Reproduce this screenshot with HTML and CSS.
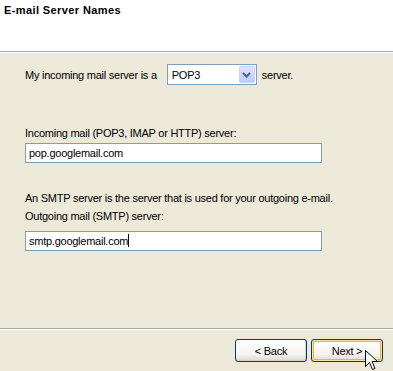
FILE: index.html
```html
<!DOCTYPE html>
<html lang="en">
<head>
    <meta charset="UTF-8">
    <meta name="viewport" content="width=device-width, initial-scale=1.0">
    <title>E-mail Server Names</title>
    <link rel="stylesheet" href="styles.css">
</head>
<body>
<div class="wizard">
    <div class="header">
        <h2>E-mail Server Names</h2>
    </div>

    <div class="content">
        <div class="server-type">
            <span>My incoming mail server is a</span>
            <div class="combo">
                <span class="combo-value">POP3</span>
                <span class="combo-button">
                    <svg width="9" height="6" viewBox="0 0 9 6">
                        <path d="M1 1 L4.5 4.5 L8 1" fill="none" stroke="#4d6185" stroke-width="2"/>
                    </svg>
                </span>
            </div>
            <span>server.</span>
        </div>

        <label class="field-label first">Incoming mail (POP3, IMAP or HTTP) server:</label>
        <div class="textbox first">pop.googlemail.com</div>

        <p class="note">An SMTP server is the server that is used for your outgoing e-mail.</p>

        <label class="field-label">Outgoing mail (SMTP) server:</label>
        <div class="textbox">smtp.googlemail.com<span class="caret"></span></div>
    </div>

    <div class="footer">
        <button class="btn">&lt; Back</button>
        <button class="btn default">Next &gt;</button>
    </div>

    <!-- mouse pointer resting on the Next button -->
    <svg class="pointer" width="13" height="21" viewBox="0 0 13 21">
        <path d="M0.5 0.5 L0.5 16.5 L4.5 12.5 L7.5 19.5 L10 18.5 L7 11.5 L12.5 11.5 Z" fill="#fff" stroke="#000" stroke-width="1"/>
    </svg>
</div>
</body>
</html>
```

FILE: styles.css
```css
body {
    margin: 0;
    font-family: "Liberation Sans", Arial, sans-serif;
    font-size: 11px;
    letter-spacing: -0.25px;
    color: #000;
    background-color: #ece9d8;
}

.wizard {
    position: relative;
    width: 393px;
    height: 371px;
    display: flex;
    flex-direction: column;
    overflow: hidden;
}

.header {
    height: 51px;
    background-color: #fff;
    border-bottom: 1px solid #aca899;
    box-shadow: 0 1px 0 #fff;
}

.header h2 {
    margin: 0;
    padding: 4px 0 0 4px;
    font-size: 11px;
    line-height: 13px;
    font-weight: bold;
    letter-spacing: 0.4px;
}

.content {
    padding: 12px 0 0 25px;
}

.server-type {
    display: flex;
    align-items: center;
}

.combo {
    display: flex;
    align-items: center;
    justify-content: space-between;
    width: 90px;
    height: 21px;
    box-sizing: border-box;
    margin: 0 5px 0 10px;
    border: 1px solid #7f9db9;
    background-color: #fff;
}

.combo-value {
    padding-left: 4px;
}

.combo-button {
    display: flex;
    align-items: center;
    justify-content: center;
    width: 16px;
    height: 17px;
    margin-right: 1px;
    border-radius: 2px;
    background: linear-gradient(#dbe6fd, #b9cdf7);
    border: 1px solid #c3d3fd;
    box-sizing: border-box;
}

.field-label {
    display: block;
    line-height: 13px;
    margin-top: 5px;
}

.field-label.first {
    margin-top: 42px;
}

.textbox {
    width: 297px;
    height: 20px;
    box-sizing: border-box;
    margin-top: 8px;
    padding: 0 3px;
    line-height: 18px;
    border: 1px solid #7f9db9;
    background-color: #fff;
}

.textbox.first {
    margin-top: 3px;
}

.caret {
    display: inline-block;
    width: 1px;
    height: 13px;
    vertical-align: -2px;
    background-color: #000;
}

.note {
    margin: 29px 0 0 0;
    line-height: 13px;
}

.footer {
    margin-top: auto;
    display: flex;
    justify-content: flex-end;
    gap: 4px;
    padding: 10px 10px 9px 0;
    border-top: 1px solid #aca899;
    box-shadow: inset 0 1px 0 #fff;
}

.btn {
    width: 72px;
    height: 23px;
    padding: 0;
    font-family: inherit;
    font-size: 11px;
    letter-spacing: -0.25px;
    color: #000;
    border: 1px solid #003c74;
    border-radius: 3px;
    background: linear-gradient(#ffffff, #f4f3ee 70%, #dcd8cb);
    box-shadow: inset -1px -1px 0 #d6d0c5;
}

.btn.default {
    box-shadow: inset 0 0 0 1px #fde0a6, inset 0 0 0 2px #f8b330;
}

.pointer {
    position: absolute;
    left: 365px;
    top: 350px;
}
```
